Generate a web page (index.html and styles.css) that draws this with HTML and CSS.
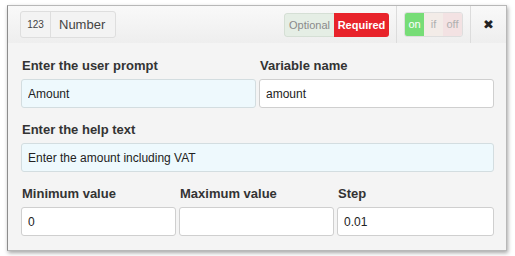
FILE: index.html
```html
<!DOCTYPE html>
<html>
<head>
    <meta charset="UTF-8">
    <title>Number field</title>
    <link rel="stylesheet" href="styles.css">
</head>

<body>
    <div class="field-card">
        <div class="field-header">
            <div class="type-badge">
                <span class="type-icon">123</span>
                <span class="type-name">Number</span>
            </div>
            <div class="header-tools">
                <div class="req-toggle">
                    <span class="req-optional">Optional</span>
                    <span class="req-required">Required</span>
                </div>
                <div class="tool-sep"></div>
                <div class="state-toggle">
                    <span class="state-on">on</span>
                    <span class="state-if">if</span>
                    <span class="state-off">off</span>
                </div>
                <div class="tool-sep last"></div>
                <button class="close-btn">&#10006;</button>
            </div>
        </div>

        <div class="field-body">
            <div class="row two-cols">
                <div class="group">
                    <label>Enter the user prompt</label>
                    <input type="text" class="tinted" value="Amount">
                </div>
                <div class="group">
                    <label>Variable name</label>
                    <input type="text" value="amount">
                </div>
            </div>

            <div class="row">
                <div class="group">
                    <label>Enter the help text</label>
                    <input type="text" class="tinted" value="Enter the amount including VAT">
                </div>
            </div>

            <div class="row three-cols">
                <div class="group">
                    <label>Minimum value</label>
                    <input type="text" value="0">
                </div>
                <div class="group">
                    <label>Maximum value</label>
                    <input type="text" value="">
                </div>
                <div class="group">
                    <label>Step</label>
                    <input type="text" value="0.01">
                </div>
            </div>
        </div>
    </div>
</body>

</html>
```

FILE: styles.css
```css
body {
    margin: 0;
    padding: 5px 8px 5px 7px;
    font-family: "Liberation Sans", Arial, sans-serif;
    background-color: #ffffff;
    color: #333;
}

.field-card {
    width: 498px;
    height: 244px;
    border: 1px solid #b8b8b8;
    border-left-color: #8c8c8c;
    background-color: #f4f4f4;
    box-shadow: 1px 2px 4px rgba(0, 0, 0, 0.35);
}

/* Шапка */
.field-header {
    height: 37px;
    display: flex;
    align-items: center;
    justify-content: space-between;
    padding: 0 0 0 12px;
    background: linear-gradient(#f9f9f9, #eeeeee);
}

.type-badge {
    display: flex;
    align-items: stretch;
    height: 25px;
    border: 1px solid #dedede;
    border-radius: 3px;
    background-color: #f3f3f3;
    margin-bottom: 1px;
}

.type-icon {
    width: 29px;
    font-size: 10px;
    color: #444;
    display: flex;
    align-items: center;
    justify-content: center;
    border-right: 1px solid #dedede;
}

.type-name {
    font-size: 13px;
    color: #444;
    padding: 0 10px 0 8px;
    display: flex;
    align-items: center;
}

.header-tools {
    display: flex;
    align-items: center;
    height: 100%;
}

.req-toggle {
    display: flex;
    height: 24px;
    margin-top: 1px;
    border-radius: 3px;
    overflow: hidden;
    font-size: 11px;
}

.req-optional {
    box-sizing: border-box;
    display: flex;
    align-items: center;
    justify-content: center;
    width: 50px;
    background-color: #e5eee5;
    color: #8a8a8a;
    border: 1px solid #d5dfd5;
    border-right: none;
    border-radius: 3px 0 0 3px;
}

.req-required {
    display: flex;
    align-items: center;
    justify-content: center;
    width: 55px;
    background-color: #e8232a;
    color: #fff;
    font-weight: bold;
}

.tool-sep {
    width: 1px;
    height: 100%;
    background-color: #dcdcdc;
    margin: 0 7px;
}

.tool-sep.last {
    margin-right: 0;
}

.state-toggle {
    display: flex;
    height: 23px;
    margin-bottom: 1px;
    border: 1px solid #dedede;
    border-radius: 3px;
    overflow: hidden;
    font-size: 11px;
}

.state-toggle span {
    display: flex;
    align-items: center;
    justify-content: center;
    color: #b0b0b0;
}

.state-on {
    width: 19px;
    background-color: #77dd77;
    color: #fff !important;
}

.state-if {
    width: 19px;
    background-color: #f3ece8;
}

.state-off {
    width: 19px;
    background-color: #f3e2e3;
}

.close-btn {
    width: 35px;
    height: 100%;
    border: none;
    background: none;
    font-size: 13px;
    color: #222;
    padding: 0;
    cursor: pointer;
}

/* Тяло на формата */
.field-body {
    padding: 15px 12px 0 13px;
}

.row {
    display: grid;
    gap: 3px;
    margin-bottom: 14px;
}

.two-cols {
    grid-template-columns: 1fr 1fr;
}

.three-cols {
    grid-template-columns: 155px 155px 1fr;
}

.group label {
    display: block;
    font-size: 13px;
    font-weight: bold;
    color: #333;
    height: 15px;
    margin-bottom: 6px;
    padding-left: 1px;
}

.group input {
    box-sizing: border-box;
    width: 100%;
    height: 29px;
    border: 1px solid #cfcfcf;
    border-radius: 3px;
    background-color: #fff;
    font-family: "Liberation Sans", Arial, sans-serif;
    font-size: 12px;
    color: #222;
    padding: 0 6px;
}

.group input.tinted {
    background-color: #eef9fd;
    border-color: #d3dde0;
}
```
